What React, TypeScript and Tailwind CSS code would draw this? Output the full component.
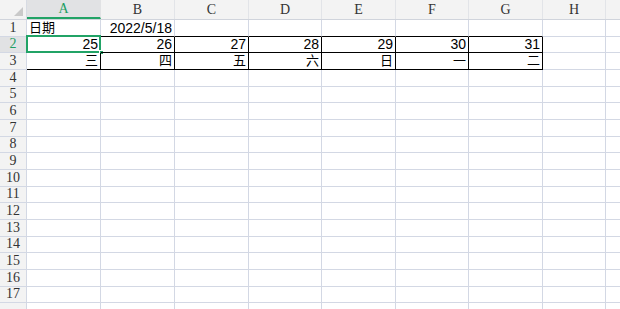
import React from 'react'

const COLS: { name: string; w: string }[] = [
  { name: 'A', w: 'w-[74px]' },
  { name: 'B', w: 'w-[74px]' },
  { name: 'C', w: 'w-[74px]' },
  { name: 'D', w: 'w-[73px]' },
  { name: 'E', w: 'w-[74px]' },
  { name: 'F', w: 'w-[73px]' },
  { name: 'G', w: 'w-[74px]' },
  { name: 'H', w: 'w-[63px]' },
]

// 行高 17/16/17 の繰り返し
const ROW_H = ['h-[17px]', 'h-[16px]', 'h-[17px]']

type Cell = { text: string; align?: 'left' | 'right'; cjk?: boolean }

const DATA: Record<number, Cell[]> = {
  1: [{ text: '日期', align: 'left', cjk: true }, { text: '2022/5/18', align: 'right' }],
  2: ['25', '26', '27', '28', '29', '30', '31'].map((t) => ({ text: t, align: 'right' as const })),
  3: ['三', '四', '五', '六', '日', '一', '二'].map((t) => ({ text: t, align: 'right' as const, cjk: true })),
}

const cellFont = { fontFamily: '"Liberation Sans", "Noto Sans CJK SC", sans-serif' }
const headFont = { fontFamily: '"Liberation Serif", "Noto Sans CJK SC", serif' }

function HeaderRow() {
  return (
    <div className="flex h-[20px] bg-[#f3f3f3] border-b border-[#d0d4dc]">
      {/* 左上コーナー */}
      <div className="w-[27px] shrink-0 relative border-r border-[#d7dbe3]">
        <svg className="absolute right-[3px] bottom-[3px]" width="9" height="9" viewBox="0 0 9 9">
          <polygon points="9,0 9,9 0,9" fill="#c9c9c9" />
        </svg>
      </div>
      {COLS.map((c, i) => (
        <div
          key={c.name}
          className={`${c.w} shrink-0 flex items-center justify-center text-[14px] border-r ${
            i === 0
              ? 'bg-[#e1e2e4] text-[#1f9e63] border-[#e1e2e4] border-b-2 border-b-[#21a366]'
              : 'text-[#333] border-[#e2e4e8]'
          }`}
          style={headFont}
        >
          {c.name}
        </div>
      ))}
      <div className="flex-1" />
    </div>
  )
}

function Row({ n }: { n: number }) {
  const h = ROW_H[(n - 1) % 3]
  const cells = DATA[n] ?? []
  const boxed = n === 2 || n === 3
  return (
    <div className={`flex ${h}`}>
      <div
        className={`w-[27px] shrink-0 flex items-end justify-center text-[14px] leading-[16px] border-r border-b border-[#d3d8e4] ${
          n === 2 ? 'bg-[#e1e2e4] text-[#1f9e63]' : 'bg-[#f3f3f3] text-[#333]'
        }`}
        style={headFont}
      >
        {n <= 17 ? n : ''}
      </div>
      {COLS.map((c, i) => {
        const cell = cells[i]
        const black = (boxed && i < 7) || (n === 1 && i < 7)
        return (
          <div
            key={c.name}
            className={`${c.w} shrink-0 relative flex items-end px-[2px] leading-[16px] text-black whitespace-nowrap border-r border-b ${
              cell?.cjk ? 'text-[13px]' : 'text-[14px]'
            } ${cell?.align === 'right' ? 'justify-end' : 'justify-start'} ${
              boxed && i < 7 ? 'border-r-black' : 'border-r-[#d3d8e4]'
            } ${black ? 'border-b-black' : 'border-b-[#d3d8e4]'}`}
            style={cellFont}
          >
            {cell?.text}
            {n === 2 && i === 0 && (
              <>
                <span className="absolute -left-px -top-[2px] right-[-1px] bottom-[-1px] border-2 border-[#21a366]" />
                <span className="absolute right-[-4px] bottom-[-3px] w-[5px] h-[5px] bg-[#21a366] border border-white" />
              </>
            )}
          </div>
        )
      })}
      <div className="flex-1 border-b border-[#d3d8e4]" />
    </div>
  )
}

export default function App() {
  const rows = Array.from({ length: 18 }, (_, i) => i + 1)
  return (
    <div className="w-[620px] h-[309px] overflow-hidden bg-white select-none">
      <HeaderRow />
      {rows.map((n) => (
        <Row key={n} n={n} />
      ))}
    </div>
  )
}
